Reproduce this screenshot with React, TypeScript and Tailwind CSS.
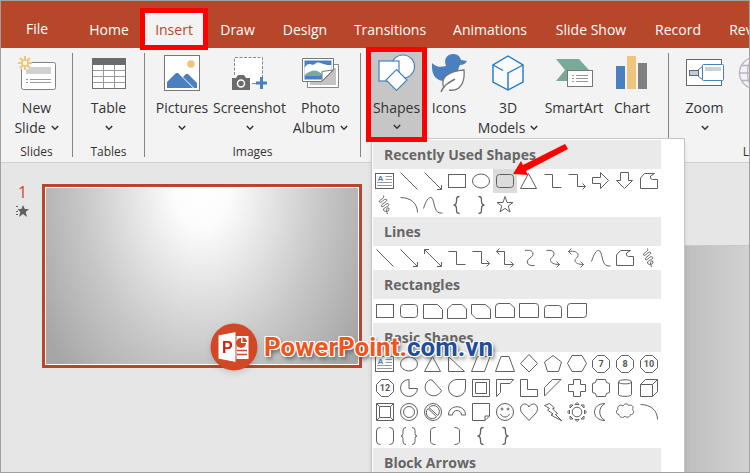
import type { ReactNode } from "react";

interface RibbonButtonProps {
  lines: string[];
  icon: ReactNode;
  width: string;
  menu?: boolean;
  muted?: boolean;
}

interface GroupProps {
  label: string;
  children: ReactNode;
  className?: string;
}

const tabs = [
  { name: "Home", width: "w-[67px] pl-[5px]" },
  { name: "Insert", width: "w-[68px]" },
  { name: "Draw", width: "w-[63px]" },
  { name: "Design", width: "w-[72px]" },
  { name: "Transitions", width: "w-[98px]" },
  { name: "Animations", width: "w-[102px]" },
  { name: "Slide Show", width: "w-[100px]" },
  { name: "Record", width: "w-[74px]" },
  { name: "Review", width: "w-[74px]" },
];

const arrowHead = "M20.5 16V20.5H16";
const octagon = <path d="M8.5 3.5H15.5L20.5 8.5V15.5L15.5 20.5H8.5L3.5 15.5V8.5Z" />;
const brace = "C11.5 3.5 11.5 5 11.5 8C11.5 11 10.5 12 8.5 12C10.5 12 11.5 13 11.5 16C11.5 19 11.5 20.5 14.5 20.5";

function polygonWithNumber(n: string) {
  return (
    <>
      {octagon}
      <text x="12" y="15" textAnchor="middle" fontSize="9" fontWeight="bold" fontFamily="Roboto, sans-serif" fill="#555" stroke="none">
        {n}
      </text>
    </>
  );
}

const shapes: Record<string, ReactNode> = {
  "Text Box": (
    <>
      <rect x="2.5" y="4.5" width="18" height="15" />
      <path d="M12.5 7.5H19M12.5 10.5H19M4 13.5H19M4 16.5H19" stroke="#999" />
      <text x="4.5" y="12" fontSize="8" fontWeight="bold" fontFamily="Liberation Sans, sans-serif" fill="#4a80bd" stroke="none">A</text>
    </>
  ),
  Line: <path d="M3.5 3.5L20.5 20.5" />,
  "Line Arrow": <path d={"M3.5 3.5L20.5 20.5" + arrowHead} />,
  "Double Arrow": <path d={"M3.5 3.5L20.5 20.5M3.5 8V3.5H8" + arrowHead} />,
  Rectangle: <rect x="3.5" y="5.5" width="17" height="13" />,
  Oval: <ellipse cx="12" cy="12" rx="8.5" ry="7" />,
  "Rounded Rectangle": <rect x="3.5" y="5.5" width="17" height="13" rx="3" />,
  Triangle: <path d="M11.5 4.5L19.5 19.5H3.5Z" />,
  Elbow: <path d="M3.5 5.5H11.5V18.5H20.5" />,
  "Elbow Arrow": <path d="M3.5 5.5H12.5V17.5H20.5M17.5 14.5L20.5 17.5L17.5 20.5" />,
  "Elbow Double Arrow": <path d="M6.5 2.5L3.5 5.5L6.5 8.5M3.5 5.5H11.5V18.5H20.5M17.5 15.5L20.5 18.5L17.5 21.5" />,
  "Right Arrow": <path d="M3.5 8.5H11.5V3.5L19.5 11.5L11.5 19.5V14.5H3.5Z" />,
  "Down Arrow": <path d="M7.5 3.5H15.5V11.5H19.5L11.5 19.5L3.5 11.5H7.5Z" />,
  Freeform: <path d="M7.5 4.5H17.5L13.5 7V9.5L15.5 10.5H20.5V19.5H3.5V9Z" />,
  Scribble: <path d="M10.5 2.5C12 6 5 7 6.5 9C8 11 11 5 13.5 6.5C15.500 8.500 7 11 8.5 13.5C10.500 15 13 9 15.5 11C17.500 13.500 10 14 10.5 17C11 19 16.500 19 16 16C15.500 13 12 15 14.500 21" />,
  Arc: <path d="M3.5 4.5C13 4.5 20.5 10 20.5 19.5" />,
  Curve: <path d="M2.5 15.5C5 8 7 4.5 9.5 4.5C14 4.5 12 19.5 19 20L21.5 20" />,
  "Left Brace": <path strokeWidth="1.3" d={"M14.5 3.5" + brace} />,
  "Right Brace": <path strokeWidth="1.3" transform="matrix(-1 0 0 1 24 0)" d={"M14.5 3.5" + brace} />,
  Star: <path d="M12 3.5L14 9.5H20L15.2 13L17 19L12 15.4L7 19L8.8 13L4 9.5H10Z" />,
  "Curved Connector": <path d="M8 4.5C17 3 18 9 13 12C8 15 10 20.5 17.5 19.5" />,
  "Curved Arrow": <path d="M5.5 4.5C13 3 15 8 11 11.5C7 15 11 18.5 18.5 18.5M15.5 15.5L18.5 18.5L15.5 21.5" />,
  "Curved Double Arrow": <path d="M6.5 2.5L3.5 5.5L6.5 8.5M3.5 5.5C13 4 15 9 11.5 12C8 15 11 18.5 18.5 18.5M15.5 15.5L18.5 18.5L15.5 21.5" />,
  "Snip Single": <path d="M2.5 5.5H16.5L21.5 10.5V19.5H2.5Z" />,
  "Snip Same": <path d="M7 5.5H17L21.5 10V19.5H2.5V10Z" />,
  "Snip Diagonal": <path d="M2.5 5.5H16.5L21.5 10V19.5H7L2.5 15Z" />,
  "Snip Round": <path d="M6 4.5H17L21.5 9V18.5H2.5V8Q2.5 4.5 6 4.5Z" />,
  "Round Single": <path d="M2.5 4.5H18.5Q21.5 4.5 21.5 7.5V18.5H2.5Z" />,
  "Round Same": <path d="M6.5 6.5H17.5Q20.5 6.5 20.5 9.5V18.5H3.5V9.5Q3.5 6.5 6.5 6.5Z" />,
  "Round Diagonal": <path d="M5.5 4.5H21.5V15.5Q21.5 18.5 18.5 18.5H2.5V7.5Q2.5 4.5 5.5 4.5Z" />,
  "Right Triangle": <path d="M3.5 4.5V19.5H19.5Z" />,
  Parallelogram: <path d="M8.5 4.5H21L15.5 19.5H2.5Z" />,
  Trapezoid: <path d="M8 4.5H16L21.5 19.5H2.5Z" />,
  Diamond: <path d="M12 2.5L20.5 11.5L12 20L3.5 11.5Z" />,
  Pentagon: <path d="M12 3.5L20.5 10L17.5 19.5H6.5L3.5 10Z" />,
  Hexagon: <path d="M7 3.5H17L21.5 11.5L17 19.5H7L2.5 11.5Z" />,
  Heptagon: polygonWithNumber("7"),
  Octagon: polygonWithNumber("8"),
  Decagon: polygonWithNumber("10"),
  Dodecagon: polygonWithNumber("12"),
  Pie: <path d="M12 3.5A8.5 8.5 0 1 0 20.5 12.5H12Z" />,
  Chord: <path d="M7.5 4.5A8.5 8.5 0 1 0 20.5 14.5L11 4Q9 3.500 7.500 4.500" />,
  Teardrop: <path d="M12 3.5H20.5V12A8.5 8.5 0 1 1 12 3.5Z" />,
  Frame: <path d="M3.5 3.5H20.5V20.5H3.5ZM6.5 6.5V17.5H17.5V6.5Z" />,
  "Half Frame": <path d="M3.5 3.5H20.5L17 7.5H7.5V16.5L3.5 20.5Z" />,
  "L-Shape": <path d="M3.5 3.5H10.5V13.5H20.5V20.5H3.5Z" />,
  "Diagonal Stripe": <path d="M3.5 11.5L11.5 3.5H20L3.5 20Z" />,
  Cross: <path d="M8.5 3.5H15.5V8.5H20.5V15.5H15.5V20.5H8.5V15.5H3.5V8.5H8.5Z" />,
  Plaque: <path d="M7.5 3.5H16.5Q16.5 7.5 20.5 7.5V16.5Q16.5 16.5 16.5 20.5H7.5Q7.5 16.5 3.5 16.5V7.5Q7.5 7.5 7.5 3.5Z" />,
  Can: <path d="M5.5 6C5.5 3 18.5 3 18.5 6V18.5C18.5 21 5.5 21 5.5 18.5ZM5.5 6C5.5 8.5 18.5 8.5 18.5 6" />,
  Cube: <path d="M3.5 8.5L8.5 3.5H20.5V15.5L15.5 20.5H3.5ZM3.5 8.5H15.5V20.5M15.5 8.5L20.5 3.5" />,
  Bevel: <path d="M3.5 3.5H20.5V20.5H3.5ZM6.5 6.5H17.5V17.5H6.5ZM3.5 3.5L6.5 6.5M20.5 3.5L17.5 6.5M3.5 20.5L6.5 17.5M20.5 20.5L17.5 17.5" />,
  Donut: (
    <>
      <circle cx="12" cy="12" r="8.5" />
      <circle cx="12" cy="12" r="5.5" />
    </>
  ),
  "No Symbol": (
    <>
      <circle cx="12" cy="12" r="8.5" />
      <path d="M8 7.5A5.8 5.8 0 0 1 16.8 15.5ZM7 8.5A5.8 5.8 0 0 0 15.5 16.8Z" />
    </>
  ),
  "Block Arc": <path d="M3.5 15C3.5 4 20.5 4 20.5 15H16.5C16.5 9 7.5 9 7.5 15Z" />,
  "Folded Corner": <path d="M3.5 3.5H20.5V16L16 20.5H3.5ZM20.5 16H16V20.5" />,
  Smiley: (
    <>
      <circle cx="12" cy="12" r="8.5" />
      <path d="M7.5 14C9 18 15 18 16.5 14" />
      <circle cx="9" cy="9" r="1" />
      <circle cx="15" cy="9" r="1" />
    </>
  ),
  Heart: <path d="M12 20.5L5 13C2 9 4 4 7.5 4C10 4 11.5 5.5 12 7C12.5 5.5 14 4 16.5 4C20 4 22 9 19 13Z" />,
  "Lightning Bolt": <path d="M8.5 3.5L13.5 8L11.5 9L16.5 13.5L14.5 14.5L21 21L10 15L12 14L6.5 10L8.5 8.5L3.5 5.5Z" />,
  Sun: (
    <>
      <circle cx="12" cy="12" r="4.8" />
      <path d="M10 4.5L12 2.5L14 4.5ZM10 19.5L12 21.5L14 19.5ZM4.5 10L2.5 12L4.5 14ZM19.5 10L21.5 12L19.5 14ZM5 5H8L5 8ZM19 5V8L16 5ZM5 19V16L8 19ZM19 19H16L19 16Z" />
    </>
  ),
  Moon: <path d="M16 3.5C2 3.5 2 20.5 16 20.5C9 17 9 7 16 3.5Z" />,
  Cloud: <path d="M6 14.5C2.5 14 3 10 5 9.5C3.5 6 8 4 10 6C11 3.5 15 3 15.5 5.5C19 4 21 7 19.5 9.5C22 12 20 15 17.5 14.5C17 17.5 13 18 12 16C10 18.5 6.5 17.5 6 14.5Z" />,
  "Double Bracket": <path d="M7.5 3.5Q3.5 3.5 3.5 7V17Q3.5 20.5 7.5 20.5M16.5 3.5Q20.5 3.5 20.5 7V17Q20.5 20.5 16.5 20.5" />,
  "Double Brace": <path d="M9 3.5Q6 3.5 6 6.5V9.5Q6 12 4 12Q6 12 6 14.5V17.5Q6 20.5 9 20.5M15 3.5Q18 3.5 18 6.5V9.5Q18 12 20 12Q18 12 18 14.5V17.5Q18 20.5 15 20.5" />,
  "Left Bracket": <path d="M14.5 3.5Q9.5 3.5 9.5 7V17Q9.5 20.5 14.5 20.5" />,
  "Right Bracket": <path d="M9.5 3.5Q14.5 3.5 14.5 7V17Q14.5 20.5 9.5 20.5" />,
};

const sections = [
  {
    title: "Recently Used Shapes",
    items: ["Text Box", "Line", "Line Arrow", "Rectangle", "Oval", "Rounded Rectangle", "Triangle", "Elbow", "Elbow Arrow", "Right Arrow", "Down Arrow", "Freeform", "Scribble", "Arc", "Curve", "Left Brace", "Right Brace", "Star"],
  },
  {
    title: "Lines",
    items: ["Line", "Line Arrow", "Double Arrow", "Elbow", "Elbow Arrow", "Elbow Double Arrow", "Curved Connector", "Curved Arrow", "Curved Double Arrow", "Curve", "Freeform", "Scribble"],
  },
  {
    title: "Rectangles",
    items: ["Rectangle", "Rounded Rectangle", "Snip Single", "Snip Same", "Snip Diagonal", "Snip Round", "Round Single", "Round Same", "Round Diagonal"],
  },
  {
    title: "Basic Shapes",
    items: [
      "Text Box", "Oval", "Triangle", "Right Triangle", "Parallelogram", "Trapezoid", "Diamond", "Pentagon", "Hexagon", "Heptagon", "Octagon", "Decagon",
      "Dodecagon", "Pie", "Chord", "Teardrop", "Frame", "Half Frame", "L-Shape", "Diagonal Stripe", "Cross", "Plaque", "Can", "Cube",
      "Bevel", "Donut", "No Symbol", "Block Arc", "Folded Corner", "Smiley", "Heart", "Lightning Bolt", "Sun", "Moon", "Cloud", "Arc",
      "Double Bracket", "Double Brace", "Left Bracket", "Right Bracket", "Left Brace", "Right Brace",
    ],
  },
  { title: "Block Arrows", items: [] },
];

function Chevron() {
  return (
    <svg width="8" height="6" viewBox="0 0 8 6" fill="none" stroke="#333" strokeWidth="1.5">
      <path d="M0.8 1L4 4.2L7.2 1" />
    </svg>
  );
}

function RibbonButton({ lines, icon, width, menu, muted }: RibbonButtonProps) {
  return (
    <button className={`${width} ${muted ? "text-[#b5b5b5]" : "text-[#333]"} shrink-0 flex flex-col items-center pt-[5px] text-[14px] leading-5 whitespace-nowrap`}>
      <span className="h-10 mb-[5px] flex items-center justify-center">{icon}</span>
      <span>{lines[0]}</span>
      <span className="h-5 flex items-center gap-[5px]">
        {lines[1]}
        {menu && <Chevron />}
      </span>
    </button>
  );
}

function Group({ label, children, className = "" }: GroupProps) {
  return (
    <section className={`${className} shrink-0 flex flex-col`}>
      <div className="flex-1 flex">{children}</div>
      <div className="h-5 text-center text-[12px] leading-5 text-[#333]">{label}</div>
    </section>
  );
}

function Divider() {
  return <div className="w-px my-[5px] shrink-0 bg-[#858585]" />;
}

function NewSlideIcon() {
  return (
    <svg width="38" height="36" viewBox="0 0 38 36" fill="none">
      <rect x="3.5" y="7.5" width="34" height="27" rx="2" fill="#fff" stroke="#808080" />
      <path d="M8 12H33V19H8Z" fill="#d0d0d0" />
      <path d="M8 24.5H10M12 24.5H33M8 27.5H10M12 27.5H33" stroke="#999" />
      <circle cx="7" cy="8" r="7" fill="#f3f3f3" />
      <path d="M7 1V5M7 11V15M0 8H4M10 8H14M2 3L5 6M9 10L12 13M12 3L9 6M5 10L2 13" stroke="#eec57b" strokeWidth="2" />
      <circle cx="7" cy="8" r="3" fill="#fff" stroke="#eec57b" strokeWidth="1.5" />
    </svg>
  );
}

function TableIcon() {
  return (
    <svg width="34" height="31" viewBox="0 0 34 31">
      <rect x="0.5" y="0.5" width="33" height="30" fill="#fff" stroke="#707070" />
      <path d="M0 0H34V7H0Z" fill="#6b6b6b" />
      <path d="M1 12.5H33M1 18.5H33M1 24.5H33M11.5 7V30M22.5 7V30" stroke="#999" />
    </svg>
  );
}

function PicturesIcon() {
  return (
    <svg width="36" height="36" viewBox="0 0 36 36">
      <rect x="0.5" y="0.5" width="35" height="35" fill="#fff" stroke="#777" />
      <circle cx="27" cy="9" r="3.8" fill="#eec57b" />
      <path d="M3 33V27L12 18H14L29 33Z" fill="#4a80bd" />
      <path d="M19 22L22 19H24L33 28V33H30Z" fill="#4a80bd" />
    </svg>
  );
}

function ScreenshotIcon() {
  return (
    <svg width="36" height="36" viewBox="0 0 36 36" fill="none">
      <path d="M2.5 2.5H30.5V28H2.5Z" fill="#fff" />
      <path d="M2.5 20V2.5H30.5V22" stroke="#888" strokeDasharray="3 1.5" />
      <path d="M20 28.5H24" stroke="#888" />
      <path d="M0 23H4L6 20H12L14 23H18V35H0Z" fill="#6b6b6b" />
      <circle cx="9" cy="28.5" r="3.5" stroke="#fff" strokeWidth="1.5" />
      <path d="M29.5 22V34M24 28H35" stroke="#4a80bd" strokeWidth="3" />
    </svg>
  );
}

function PhotoAlbumIcon() {
  return (
    <svg width="37" height="32" viewBox="0 0 37 32" fill="none">
      <path d="M5.5 7.5H36.5V30.500H5.5Z" fill="#fff" stroke="#888" />
      <path d="M8 11H34V28H8Z" fill="#c4c4c4" />
      <path d="M0.500 1.500H31.500V13L20 24.500H0.500Z" fill="#fff" stroke="#777" />
      <path d="M2.500 3.500H29.500V12L19 22.500H2.500Z" fill="#4a80bd" />
      <path d="M2.500 11C7 3 10 10 13 7C17 3 20 9 29.500 8V12L21 19H2.500Z" fill="#fff" />
      <path d="M2.500 18C10 12 15 12 21 18V19H2.500Z" fill="#78aa96" />
      <path d="M20 24V14.500L31 13Z" fill="#fff" stroke="#777" />
    </svg>
  );
}

function ShapesIcon() {
  return (
    <svg width="38" height="38" viewBox="0 0 38 38" fill="#fff" stroke="#4a80bd" strokeWidth="1.200">
      <circle cx="25" cy="12.500" r="11.500" />
      <rect x="1" y="7" width="20" height="20" />
      <path d="M18.500 15.500L29 26L18.500 36.500L8 26Z" />
    </svg>
  );
}

function DuckIcon() {
  return (
    <svg width="36" height="38" viewBox="0 0 36 38">
      <path d="M1 9C6 14 11 13 15 12C12 4 17 0 22 0C26 0 29 2 30 6L36 7C34 10 32 11 29 11C25 18 29 25 20 27C9 28 0 26 1 9Z" fill="#4a80bd" />
      <path d="M13 34C8 22 20 17 33 16C34 27 30 38 18 36" fill="#fff" stroke="#777" strokeWidth="1.300" />
      <path d="M10 38C12 32 17 29 24 25" fill="none" stroke="#777" strokeWidth="1.500" />
    </svg>
  );
}

function CubeIcon() {
  return (
    <svg width="32" height="36" viewBox="0 0 32 36" fill="#fafafa" stroke="#1e78c8" strokeWidth="1.400">
      <path d="M16 1L31 10V27L16 35L1 27V10Z" />
      <path d="M1 10L11 15.500M31 10L16 18V35" fill="none" />
    </svg>
  );
}

function SmartArtIcon() {
  return (
    <svg width="37" height="28" viewBox="0 0 37 28">
      <path d="M0 0H23L33 11L23 22H0L9 11Z" fill="#78aa96" />
      <rect x="11.500" y="11.500" width="25" height="16" fill="#fff" stroke="#777" />
      <path d="M16 16.500H18M20 16.500H32M16 19.500H18M20 19.500H32M16 22.500H18M20 22.500H32" stroke="#999" />
    </svg>
  );
}

function ChartIcon() {
  return (
    <svg width="32" height="34" viewBox="0 0 32 34">
      <path d="M0 10H9V33H0Z" fill="#4a80bd" />
      <path d="M11 0H20V33H11Z" fill="#eec57b" />
      <path d="M22 7H31V33H22Z" fill="#808080" />
    </svg>
  );
}

function ZoomIcon() {
  return (
    <svg width="38" height="28" viewBox="0 0 38 28" fill="#fff">
      <rect x="0.500" y="0.500" width="35" height="26" stroke="#666" />
      <path d="M12 11L17 7M12 17L17 21" stroke="#4a80bd" />
      <rect x="3.500" y="11.500" width="9" height="5" fill="#b9cde0" stroke="#666" />
      <rect x="16.500" y="5.500" width="21" height="16" rx="1" stroke="#4a80bd" />
      <path d="M19 8H35V12H19Z" fill="#d0d0d0" />
    </svg>
  );
}

function GlobeIcon() {
  return (
    <svg width="48" height="34" viewBox="0 0 48 34" fill="#f5f1f7" stroke="#b9b3bd" strokeWidth="1.300">
      <circle cx="17" cy="17" r="15.500" />
      <ellipse cx="17" cy="17" rx="7.500" ry="15.500" />
      <path d="M1.500 17H32.500M4 9.500H30M4 24.500H30M17 1.500V32.500" />
    </svg>
  );
}

function ShapesMenu() {
  return (
    <div className="absolute left-[5px] top-[90px] z-10 w-[314px] h-[420px] pl-px pt-px bg-white border border-[#c6c6c6] shadow-md">
      {sections.map((section) => (
        <div key={section.title} className="w-72">
          <h3 className="h-[29px] pl-[11px] bg-[#eaeaea] text-[14px] leading-[30px] font-bold text-[#666]">{section.title}</h3>
          <div className="grid grid-cols-12">
            {section.items.map((name) => (
              <button
                key={name}
                aria-label={name}
                className={`size-6 ${section.title === "Recently Used Shapes" && name === "Rounded Rectangle" ? "bg-[#dcdcdc]" : ""}`}
              >
                <svg className="block" width="24" height="24" viewBox="0 0 24 24" fill="none" stroke="#606060">
                  {shapes[name]}
                </svg>
              </button>
            ))}
          </div>
        </div>
      ))}
      <svg className="absolute left-[141px] top-[5px]" width="56" height="32" viewBox="0 0 56 32" fill="#f00">
        <path d="M0 30L8 17L10 21L52 0L55 5L13 27L15 31Z" />
      </svg>
    </div>
  );
}

function Watermark() {
  return (
    <div className="absolute left-[209px] top-[322px] z-20 flex items-center gap-[6px]">
      <svg className="drop-shadow-md" width="48" height="48" viewBox="0 0 48 48">
        <circle cx="24" cy="24" r="23.500" fill="#d24726" />
        <path d="M25 13H38.500V36H25Z" fill="#fff" />
        <circle cx="31" cy="20" r="5" fill="#d24726" />
        <path d="M31 20V14H38V20Z" fill="#fff" />
        <path d="M32.500 19V14.500A4.500 4.500 0 0 1 37 19Z" fill="#d24726" />
        <path d="M27 27.500H37M27 31.500H37" stroke="#d24726" strokeWidth="1.500" />
        <path d="M8 12L26 8.500V39.500L8 36Z" fill="#fff" stroke="#d24726" />
        <text x="12" y="30" fontSize="16" fontWeight="bold" fontFamily="Liberation Sans, sans-serif" fill="#d21f0a">P</text>
      </svg>
      <span className="font-['Roboto',sans-serif] text-[26px] leading-8 font-bold text-[#f2551b] [text-shadow:1px_0_#fff,-1px_0_#fff,0_1px_#fff,0_-1px_#fff,1px_1px_#fff,-1px_-1px_#fff,1px_-1px_#fff,-1px_1px_#fff,2px_3px_4px_#555]">
        PowerPoint.<span className="text-[#1f4e9c]">com.vn</span>
      </span>
    </div>
  );
}

export default function App() {
  return (
    <div className="relative h-screen flex flex-col overflow-hidden border border-[#a0a0a0] bg-[#e6e6e6] font-['Open_Sans','Noto_Sans',sans-serif]">
      <nav className="h-[47px] shrink-0 flex bg-[#b7472a] text-white text-[14px] leading-5 whitespace-nowrap">
        <button className="w-[72px] shrink-0 pt-[8px]">File</button>
        {tabs.map((tab) =>
          tab.name === "Insert" ? (
            <button key={tab.name} className={`${tab.width} relative z-10 h-[42px] mt-[7px] -mr-[2px] shrink-0 pt-[2px] border-5 border-[#f00] bg-[#f3f3f3] text-[#b7472a]`}>
              {tab.name}
            </button>
          ) : (
            <button key={tab.name} className={`${tab.width} shrink-0 pt-[10px]`}>
              {tab.name}
            </button>
          )
        )}
      </nav>

      <div className="h-[115px] shrink-0 flex bg-[#f3f3f3] border-b border-[#cfcfcf]">
        <Group label="Slides" className="w-[71px]">
          <RibbonButton lines={["New", "Slide"]} icon={<NewSlideIcon />} width="w-[71px]" menu />
        </Group>
        <Divider />
        <Group label="Tables" className="w-[71px]">
          <RibbonButton lines={["Table"]} icon={<TableIcon />} width="w-[71px]" menu />
        </Group>
        <Divider />
        <Group label="Images" className="w-[215px] px-[5px]">
          <RibbonButton lines={["Pictures"]} icon={<PicturesIcon />} width="w-16" menu />
          <RibbonButton lines={["Screenshot"]} icon={<ScreenshotIcon />} width="w-[71px]" menu />
          <RibbonButton lines={["Photo", "Album"]} icon={<PhotoAlbumIcon />} width="w-[71px]" menu />
        </Group>
        <Divider />
        <Group label="Illustrations" className="w-[307px] px-[5px]">
          <div className="relative">
            <div className="relative z-20 w-[61px] h-[95px] -mt-px flex justify-center overflow-hidden border-5 border-[#f00] bg-[#c6c6c6]">
              <div className="-mt-[3px] flex">
                <RibbonButton lines={["Shapes"]} icon={<ShapesIcon />} width="w-[51px]" menu />
              </div>
            </div>
            <ShapesMenu />
          </div>
          <RibbonButton lines={["Icons"]} icon={<DuckIcon />} width="w-11" />
          <RibbonButton lines={["3D", "Models"]} icon={<CubeIcon />} width="w-[74px]" menu />
          <RibbonButton lines={["SmartArt"]} icon={<SmartArtIcon />} width="w-[58px]" />
          <RibbonButton lines={["Chart"]} icon={<ChartIcon />} width="w-[58px]" />
        </Group>
        <Divider />
        <Group label="Links" className="w-[176px]">
          <RibbonButton lines={["Zoom"]} icon={<ZoomIcon />} width="w-[71px]" menu />
          <RibbonButton lines={["Link"]} icon={<GlobeIcon />} width="w-11" muted />
        </Group>
      </div>

      <main className="flex-1 flex">
        <aside className="w-[371px] shrink-0 flex gap-[10px] pt-[21px] pl-3">
          <div className="w-[19px] flex flex-col items-center text-[16px] leading-4 text-[#d24726]">
            <span>1</span>
            <svg className="mt-[5px]" width="13" height="12" viewBox="0 0 13 12" fill="#606060">
              <path d="M7 0L8.800 4H13L9.700 7L11 12L7 9L3 12L4.300 7L1.500 4H5.300Z" />
              <path d="M0 1H2V2H0ZM0 6H2V7H0ZM0 9H2V10H0Z" />
            </svg>
          </div>
          <div className="w-80 h-[184px] border-3 border-[#b7472a]">
            <div className="h-full border border-white bg-[radial-gradient(ellipse_60%_150%_at_50%_0%,#fff_0%,#fcfcfc_15%,#c6c6c6_65%,#b4b4b4_85%,#a6a6a6_100%)]" />
          </div>
        </aside>
        <section className="flex-1 mt-[82px] border-t border-[#c8c8c8] bg-linear-to-r from-[#bdbdbd] from-82% to-[#d2d2d2]" />
      </main>

      <Watermark />
    </div>
  );
}
